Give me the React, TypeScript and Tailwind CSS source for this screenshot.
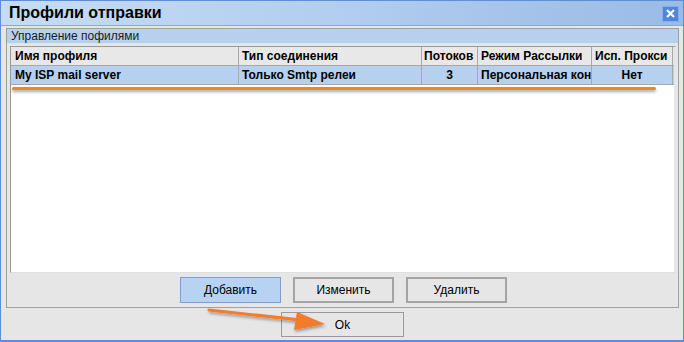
import React from "react";

const cols = [
  { w: "w-[228px]", h: "Имя профиля", v: "My ISP mail server", align: "pl-[4px]" },
  { w: "w-[183px]", h: "Тип соединения", v: "Только Smtp релеи", align: "pl-[3px]" },
  { w: "w-[56px]", h: "Потоков", v: "3", align: "pl-[2px]", center: true },
  { w: "w-[114px]", h: "Режим Рассылки", v: "Персональная конфигурация", align: "pl-[3px]" },
  { w: "w-[81px]", h: "Исп. Прокси", v: "Нет", align: "pl-[3px]", center: true },
];

export default function App() {
  return (
    <div
      className="relative w-[684px] h-[342px] bg-[#e6e6e6] border border-[#5d8ed6] border-b-2 flex flex-col overflow-hidden"
      style={{ fontFamily: '"Liberation Sans", Arial, sans-serif' }}
    >
      {/* title bar */}
      <div className="h-[25px] shrink-0 flex items-center justify-between bg-gradient-to-r from-[#c6dcf4] via-[#b2cdef] to-[#99bbe5] border-b border-[#8fa9c8] pl-[8px] pr-[4px]">
        <span className="text-[16px] font-bold text-black leading-none">Профили отправки</span>
        <div className="w-[17px] h-[16px] bg-[#4f86dc] border border-[#87aee8] flex items-center justify-center mt-[1px]">
          <svg width="9" height="9" viewBox="0 0 9 9">
            <path d="M1 1 L8 8 M8 1 L1 8" stroke="white" strokeWidth="2.2" />
          </svg>
        </div>
      </div>

      {/* body */}
      <div className="flex-1 flex flex-col pl-[5px] pr-[4px] pt-[2px]">
        <div className="h-[280px] border border-[#a0a0a0] flex flex-col">
          <div className="h-[15px] bg-[#b7d0ed] border-b border-[#d6e4f4] text-[12px] leading-[14px] pl-[4px] text-[#1a1a1a]">
            Управление пофилями
          </div>
          <div className="flex-1 flex flex-col pl-[3px] pr-[1px] pt-[2px]">
            <div className="relative h-[227px] bg-white border-l border-t border-[#9a9a9a] border-r-[3px] border-r-[#e6e6e6] border-b border-b-[#e0e0e0]">
              {/* header */}
              <div className="flex h-[19px] bg-[#e8e8e8] border-b border-[#a8a8a8]">
                {cols.map((c, i) => (
                  <div
                    key={i}
                    className={`${c.w} shrink-0 border-r border-[#a8a8a8] ${c.align} text-[12px] font-bold leading-[18px] whitespace-nowrap overflow-hidden text-black`}
                  >
                    {c.h}
                  </div>
                ))}
              </div>
              {/* row */}
              <div className="flex h-[19px] bg-[#b6d1ef] border-b border-[#a8a8a8]">
                {cols.map((c, i) => (
                  <div
                    key={i}
                    className={`${c.w} shrink-0 border-r border-[#a8a8a8] ${c.center ? "text-center" : c.align} text-[12px] font-bold leading-[18px] whitespace-nowrap overflow-hidden text-black`}
                  >
                    {c.v}
                  </div>
                ))}
              </div>
              {/* orange underline */}
              <div className="absolute left-[1px] top-[40px] w-[644px] h-[3px] rounded-full bg-[#f0861c] shadow-[0_2px_3px_rgba(0,0,0,0.35)]" />
            </div>
            <div className="flex justify-center gap-[12px] mt-[4px]">
              <button className="w-[101px] h-[26px] bg-[#b8d3f1] border border-[#7c9ecb] text-[12px] text-black">
                Добавить
              </button>
              <button className="w-[101px] h-[26px] bg-[#e6e6e6] border-2 border-[#a4a4a4] text-[12px] text-black">
                Изменить
              </button>
              <button className="w-[101px] h-[26px] bg-[#e6e6e6] border-2 border-[#a4a4a4] text-[12px] text-black">
                Удалить
              </button>
            </div>
          </div>
        </div>
        <div className="flex justify-center mt-[4px]">
          <button className="w-[123px] h-[25px] bg-[#e6e6e6] border border-[#9a9a9a] text-[12px] text-black">
            Ok
          </button>
        </div>
      </div>

      {/* arrow */}
      <svg className="absolute left-0 top-0 pointer-events-none" width="684" height="342">
        <defs>
          <filter id="sh" x="-10%" y="-50%" width="130%" height="250%">
            <feDropShadow dx="1" dy="2" stdDeviation="1.5" floodColor="#000" floodOpacity="0.35" />
          </filter>
        </defs>
        <g filter="url(#sh)">
          <line x1="208" y1="309" x2="300" y2="319" stroke="#f27b2c" strokeWidth="3" strokeLinecap="round" />
          <polygon points="324,323 296,311 293,329" fill="#f27b2c" />
        </g>
      </svg>
    </div>
  );
}
